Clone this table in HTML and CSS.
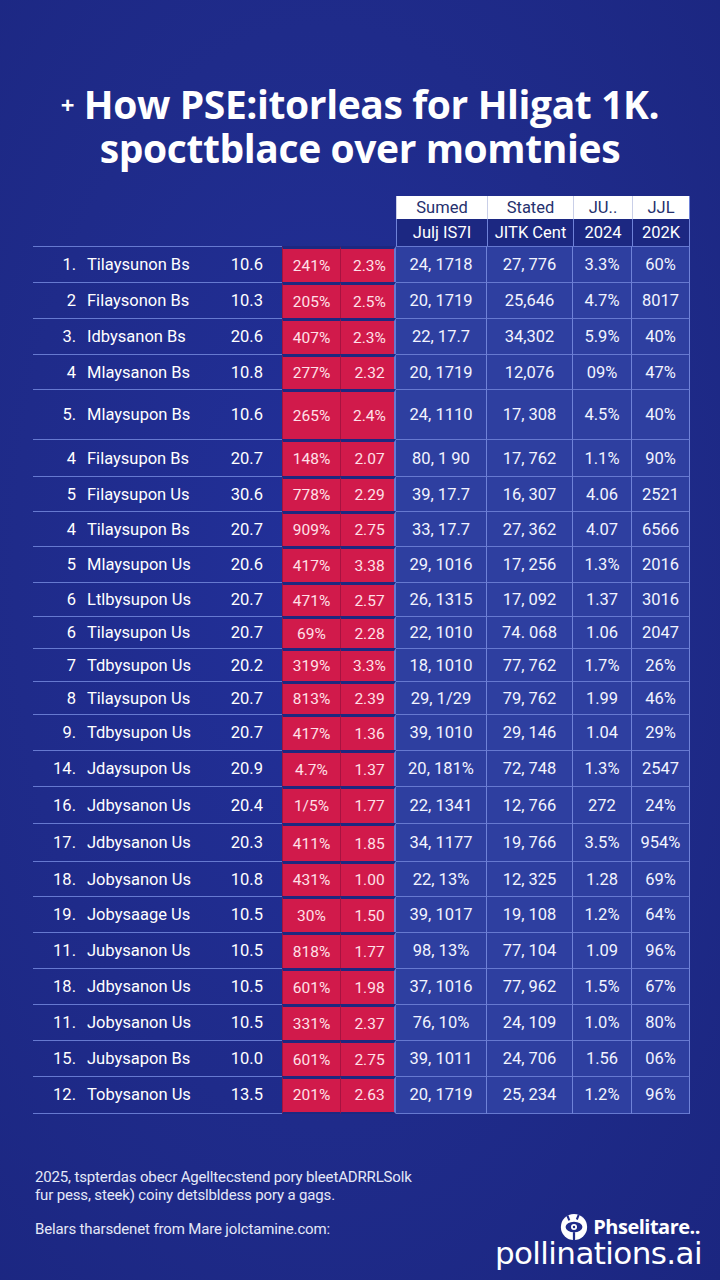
FILE: index.html
```html
<!DOCTYPE html>
<html lang="en">
<head>
<meta charset="utf-8">
<title>Table</title>
<link rel="stylesheet" href="styles.css">
</head>
<body>
<div class="page">
  <h1 class="title"><span class="plus">+</span> How PSE:itorleas for Hligat 1K.<br>spocttblace over momtnies</h1>

  <div class="table">
    <div class="head head-top">
      <div class="spacer"></div>
      <div class="hc">Sumed</div><div class="hc">Stated</div><div class="hc">JU..</div><div class="hc">JJL</div>
    </div>
    <div class="head head-sub">
      <div class="spacer"></div>
      <div class="hs">Julj IS7I</div><div class="hs">JITK Cent</div><div class="hs">2024</div><div class="hs">202K</div>
    </div>

    <div class="row"><div class="c rank">1.</div><div class="c name">Tilaysunon Bs</div><div class="c val">10.6</div><div class="c red">241%</div><div class="c red r2">2.3%</div><div class="c blue">24, 1718</div><div class="c blue">27, 776</div><div class="c blue">3.3%</div><div class="c blue">60%</div></div>
    <div class="row"><div class="c rank">2</div><div class="c name">Filaysonon Bs</div><div class="c val">10.3</div><div class="c red">205%</div><div class="c red r2">2.5%</div><div class="c blue">20, 1719</div><div class="c blue">25,646</div><div class="c blue">4.7%</div><div class="c blue">8017</div></div>
    <div class="row"><div class="c rank">3.</div><div class="c name">Idbysanon Bs</div><div class="c val">20.6</div><div class="c red">407%</div><div class="c red r2">2.3%</div><div class="c blue">22, 17.7</div><div class="c blue">34,302</div><div class="c blue">5.9%</div><div class="c blue">40%</div></div>
    <div class="row h35"><div class="c rank">4</div><div class="c name">Mlaysanon Bs</div><div class="c val">10.8</div><div class="c red">277%</div><div class="c red r2">2.32</div><div class="c blue">20, 1719</div><div class="c blue">12,076</div><div class="c blue">09%</div><div class="c blue">47%</div></div>
    <div class="row tall"><div class="c rank">5.</div><div class="c name">Mlaysupon Bs</div><div class="c val">10.6</div><div class="c red">265%</div><div class="c red r2">2.4%</div><div class="c blue">24, 1110</div><div class="c blue">17, 308</div><div class="c blue">4.5%</div><div class="c blue">40%</div></div>
    <div class="row h37"><div class="c rank">4</div><div class="c name">Filaysupon Bs</div><div class="c val">20.7</div><div class="c red">148%</div><div class="c red r2">2.07</div><div class="c blue">80, 1 90</div><div class="c blue">17, 762</div><div class="c blue">1.1%</div><div class="c blue">90%</div></div>
    <div class="row h35"><div class="c rank">5</div><div class="c name">Filaysupon Us</div><div class="c val">30.6</div><div class="c red">778%</div><div class="c red r2">2.29</div><div class="c blue">39, 17.7</div><div class="c blue">16, 307</div><div class="c blue">4.06</div><div class="c blue">2521</div></div>
    <div class="row h35"><div class="c rank">4</div><div class="c name">Tilaysupon Bs</div><div class="c val">20.7</div><div class="c red">909%</div><div class="c red r2">2.75</div><div class="c blue">33, 17.7</div><div class="c blue">27, 362</div><div class="c blue">4.07</div><div class="c blue">6566</div></div>
    <div class="row"><div class="c rank">5</div><div class="c name">Mlaysupon Us</div><div class="c val">20.6</div><div class="c red">417%</div><div class="c red r2">3.38</div><div class="c blue">29, 1016</div><div class="c blue">17, 256</div><div class="c blue">1.3%</div><div class="c blue">2016</div></div>
    <div class="row h34"><div class="c rank">6</div><div class="c name">Ltlbysupon Us</div><div class="c val">20.7</div><div class="c red">471%</div><div class="c red r2">2.57</div><div class="c blue">26, 1315</div><div class="c blue">17, 092</div><div class="c blue">1.37</div><div class="c blue">3016</div></div>
    <div class="row h32"><div class="c rank">6</div><div class="c name">Tilaysupon Us</div><div class="c val">20.7</div><div class="c red">69%</div><div class="c red r2">2.28</div><div class="c blue">22, 1010</div><div class="c blue">74. 068</div><div class="c blue">1.06</div><div class="c blue">2047</div></div>
    <div class="row h33"><div class="c rank">7</div><div class="c name">Tdbysupon Us</div><div class="c val">20.2</div><div class="c red">319%</div><div class="c red r2">3.3%</div><div class="c blue">18, 1010</div><div class="c blue">77, 762</div><div class="c blue">1.7%</div><div class="c blue">26%</div></div>
    <div class="row h33"><div class="c rank">8</div><div class="c name">Tilaysupon Us</div><div class="c val">20.7</div><div class="c red">813%</div><div class="c red r2">2.39</div><div class="c blue">29, 1/29</div><div class="c blue">79, 762</div><div class="c blue">1.99</div><div class="c blue">46%</div></div>
    <div class="row"><div class="c rank">9.</div><div class="c name">Tdbysupon Us</div><div class="c val">20.7</div><div class="c red">417%</div><div class="c red r2">1.36</div><div class="c blue">39, 1010</div><div class="c blue">29, 146</div><div class="c blue">1.04</div><div class="c blue">29%</div></div>
    <div class="row"><div class="c rank">14.</div><div class="c name">Jdaysupon Us</div><div class="c val">20.9</div><div class="c red">4.7%</div><div class="c red r2">1.37</div><div class="c blue">20, 181%</div><div class="c blue">72, 748</div><div class="c blue">1.3%</div><div class="c blue">2547</div></div>
    <div class="row h37"><div class="c rank">16.</div><div class="c name">Jdbysanon Us</div><div class="c val">20.4</div><div class="c red">1/5%</div><div class="c red r2">1.77</div><div class="c blue">22, 1341</div><div class="c blue">12, 766</div><div class="c blue">272</div><div class="c blue">24%</div></div>
    <div class="row h38"><div class="c rank">17.</div><div class="c name">Jdbysanon Us</div><div class="c val">20.3</div><div class="c red">411%</div><div class="c red r2">1.85</div><div class="c blue">34, 1177</div><div class="c blue">19, 766</div><div class="c blue">3.5%</div><div class="c blue">954%</div></div>
    <div class="row h35"><div class="c rank">18.</div><div class="c name">Jobysanon Us</div><div class="c val">10.8</div><div class="c red">431%</div><div class="c red r2">1.00</div><div class="c blue">22, 13%</div><div class="c blue">12, 325</div><div class="c blue">1.28</div><div class="c blue">69%</div></div>
    <div class="row"><div class="c rank">19.</div><div class="c name">Jobysaage Us</div><div class="c val">10.5</div><div class="c red">30%</div><div class="c red r2">1.50</div><div class="c blue">39, 1017</div><div class="c blue">19, 108</div><div class="c blue">1.2%</div><div class="c blue">64%</div></div>
    <div class="row"><div class="c rank">11.</div><div class="c name">Jubysanon Us</div><div class="c val">10.5</div><div class="c red">818%</div><div class="c red r2">1.77</div><div class="c blue">98, 13%</div><div class="c blue">77, 104</div><div class="c blue">1.09</div><div class="c blue">96%</div></div>
    <div class="row"><div class="c rank">18.</div><div class="c name">Jdbysanon Us</div><div class="c val">10.5</div><div class="c red">601%</div><div class="c red r2">1.98</div><div class="c blue">37, 1016</div><div class="c blue">77, 962</div><div class="c blue">1.5%</div><div class="c blue">67%</div></div>
    <div class="row"><div class="c rank">11.</div><div class="c name">Jobysanon Us</div><div class="c val">10.5</div><div class="c red">331%</div><div class="c red r2">2.37</div><div class="c blue">76, 10%</div><div class="c blue">24, 109</div><div class="c blue">1.0%</div><div class="c blue">80%</div></div>
    <div class="row"><div class="c rank">15.</div><div class="c name">Jubysapon Bs</div><div class="c val">10.0</div><div class="c red">601%</div><div class="c red r2">2.75</div><div class="c blue">39, 1011</div><div class="c blue">24, 706</div><div class="c blue">1.56</div><div class="c blue">06%</div></div>
    <div class="row last"><div class="c rank">12.</div><div class="c name">Tobysanon Us</div><div class="c val">13.5</div><div class="c red">201%</div><div class="c red r2">2.63</div><div class="c blue">20, 1719</div><div class="c blue">25, 234</div><div class="c blue">1.2%</div><div class="c blue">96%</div></div>
  </div>

  <div class="footer">
    <div class="notes">
      <p class="note">2025, tspterdas obecr Agelltecstend pory bleetADRRLSolk<br>fur pess, steek) coiny detslbldess pory a gags.</p>
      <p class="note source">Belars tharsdenet from Mare jolctamine.com:</p>
    </div>
    <div class="brand">
      <div class="brand-top">
        <svg class="logo" viewBox="0 0 32 32" width="30" height="30" aria-hidden="true">
          <circle cx="16" cy="16" r="14" fill="#ffffff"/>
          <path d="M9 4 L11 9 M21 3 L19 8" stroke="#1f2b8a" stroke-width="2.2"/>
          <ellipse cx="16" cy="16" rx="9" ry="5.5" fill="#1f2b8a"/>
          <circle cx="16" cy="16" r="3.2" fill="#ffffff"/>
          <circle cx="16" cy="16" r="1.3" fill="#1f2b8a"/>
          <path d="M16 21.5 L16 31" stroke="#1f2b8a" stroke-width="2.4"/>
        </svg>
        <span class="brand-name">Phselitare..</span>
      </div>
      <div class="brand-url">pollinations.ai</div>
    </div>
  </div>
</div>
</body>
</html>
```

FILE: styles.css
```css
* { box-sizing: border-box; }
html, body {
  margin: 0;
  padding: 0;
}
body {
  background: #1f2b8a;
  width: 720px;
  height: 1280px;
  overflow: hidden;
  font-family: Roboto, "Liberation Sans", sans-serif;
  color: #ffffff;
}
.page {
  width: 720px;
  height: 1280px;
  background: radial-gradient(ellipse at 45% 45%, #22309a 0%, #1f2b8a 55%, #1b2680 100%);
  display: flex;
  flex-direction: column;
}
.title {
  margin: 0;
  padding-top: 82px;
  font-family: "Open Sans", "Liberation Sans", sans-serif;
  font-weight: 700;
  font-size: 39px;
  line-height: 43px;
  text-align: center;
  letter-spacing: -0.4px;
  color: #ffffff;
}
.plus {
  font-size: 24px;
  vertical-align: 5px;
}
.table {
  margin-top: 27px;
  margin-left: 33px;
  width: 657px;
}
.head, .row {
  display: grid;
  grid-template-columns: 49px 138px 62px 58px 56px 91px 86px 59px 58px;
}
.head .spacer { grid-column: 1 / 6; }
.head-top { height: 23px; }
.hc {
  background: #ffffff;
  color: #25306e;
  font-size: 16.5px;
  text-align: center;
  line-height: 23px;
  border-left: 1px solid #c9cfe8;
}
.head-sub { height: 27px; }
.hs {
  background: #1c2882;
  color: #ffffff;
  font-size: 16.5px;
  text-align: center;
  line-height: 27px;
  border-left: 1px solid #6f82d8;
}
.hs:last-child, .hc:last-child { border-right: 1px solid #6f82d8; }
.row { height: 36px; }
.row.last { height: 37.5px; }
.row.last .c { border-bottom: 1.5px solid #6679d0; }
.row.last .red { border-bottom: 2px solid #1d2880; }
.row.tall { height: 50px; }
.row.h32 { height: 32px; }
.row.h33 { height: 33px; }
.row.h34 { height: 34px; }
.row.h35 { height: 35px; }
.row.h37 { height: 37px; }
.row.h38 { height: 38px; }
.c {
  display: flex;
  align-items: center;
  font-size: 16.5px;
  white-space: nowrap;
  border-top: 1.5px solid #6679d0;
}
.rank {
  justify-content: flex-end;
  padding-right: 6px;
}
.name { padding-left: 5px; }
.val {
  justify-content: flex-end;
  padding-right: 19px;
}
.red {
  background: #d11a4b;
  color: #ffe0e8;
  font-size: 15.5px;
  justify-content: center;
  border-top: 3px solid #1d2880;
  border-left: 1px solid #9e1440;
}
.r2 {
  border-left: 1px solid #a81240;
  border-right: 2px solid #6679d0;
  padding-left: 4px;
}
.blue {
  background: #2e3fa0;
  justify-content: center;
  border-right: 1px solid #6f82d8;
  font-size: 16.5px;
  color: #f2f4ff;
}
.footer {
  margin-top: auto;
  display: flex;
  justify-content: space-between;
  align-items: flex-end;
  padding: 0 18px 12px 35px;
}
.notes { padding-bottom: 30px; }
.note {
  margin: 0;
  font-size: 15px;
  line-height: 18px;
  color: #e4e8f8;
  letter-spacing: -0.15px;
}
.source { margin-top: 16px; }
.brand {
  display: flex;
  flex-direction: column;
  align-items: flex-end;
}
.brand-top {
  display: flex;
  align-items: center;
  gap: 4px;
  margin-right: 2px;
  margin-bottom: -2px;
  height: 26px;
}
.logo { display: block; }
.brand-name {
  font-family: "Open Sans", "Liberation Sans", sans-serif;
  font-weight: 700;
  font-size: 20px;
  line-height: 22px;
  letter-spacing: -0.5px;
}
.brand-url {
  font-family: "DejaVu Sans", "Liberation Sans", sans-serif;
  font-size: 31px;
  line-height: 30px;
  letter-spacing: -0.6px;
  color: #ffffff;
}
```
